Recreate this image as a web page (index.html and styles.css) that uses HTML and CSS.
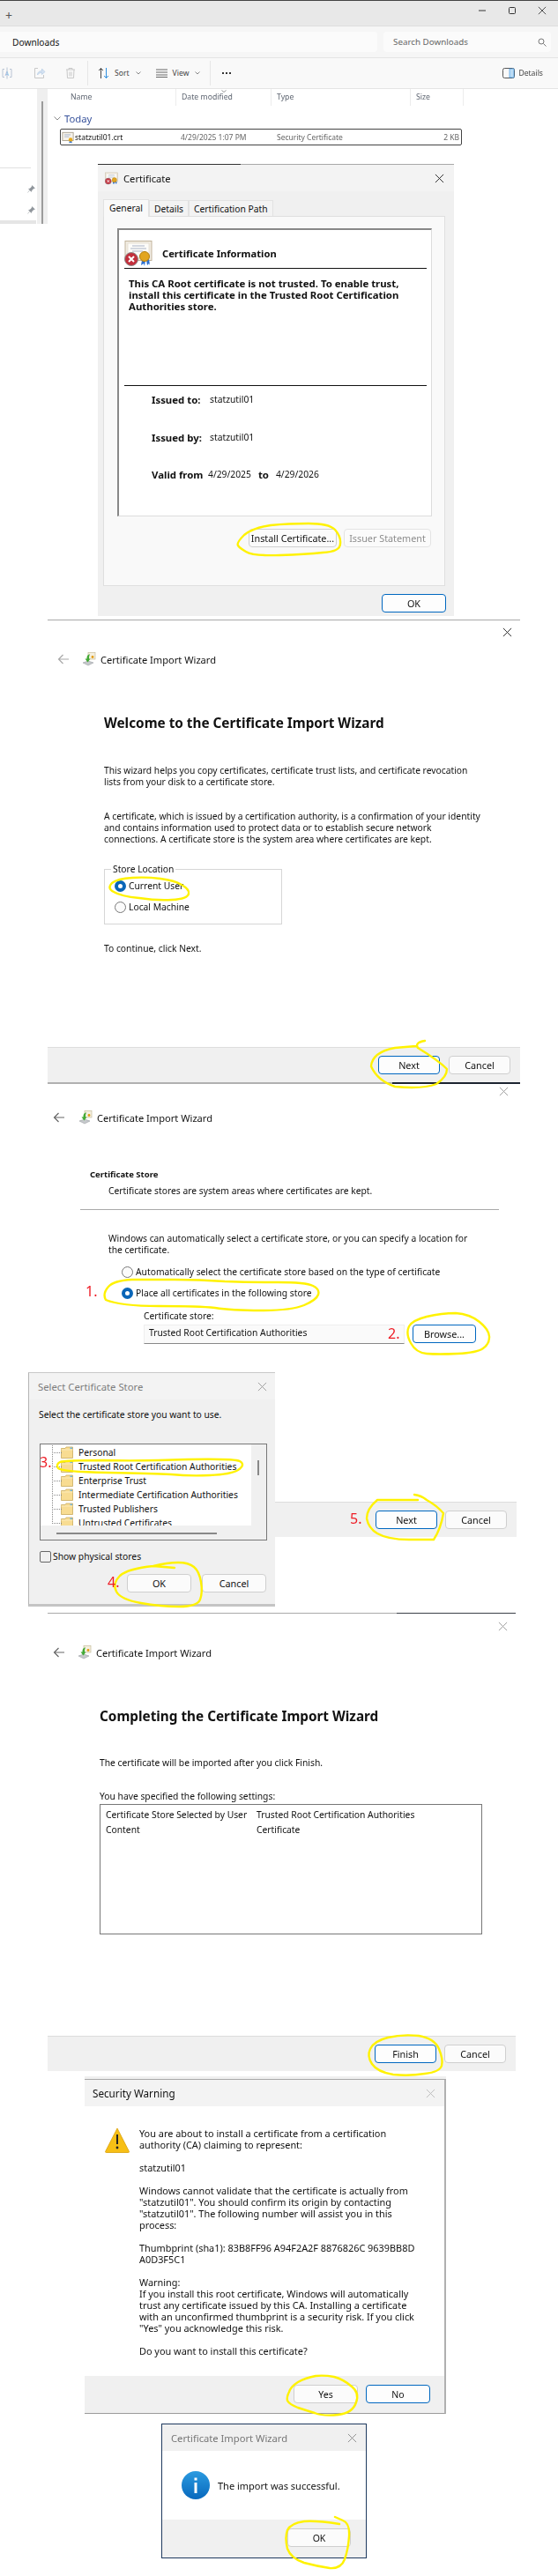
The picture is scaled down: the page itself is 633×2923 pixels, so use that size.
FILE: index.html
```html
<!DOCTYPE html>
<html lang="en">

<head>
  <meta charset="UTF-8">
  <title>Installing a certificate</title>
  <link rel="stylesheet" href="styles.css">
</head>

<body>
  <svg class="defs" width="0" height="0">
    <symbol id="cert" viewBox="0 0 32 29">
      <rect x="1" y="0.5" width="30" height="22" fill="#f1ece2" stroke="#c2b49c"/>
      <rect x="4" y="3" width="24" height="17" fill="#fdfcf9" stroke="#ddd4c4" stroke-width=".6"/>
      <path d="M9 6h14M7 9h18M9 12h12" stroke="#a9b3c6"/>
      <path d="M20 22l-1 6 3-2 1 3 1-7zM25 22l1 6 2-2 1 2-1-7z" fill="#2b6fd0"/>
      <circle cx="23" cy="18" r="5.5" fill="#e2a51f" stroke="#b57f10"/>
      <circle cx="8" cy="21" r="7.5" fill="#c22f3c" stroke="#8d8d8d"/>
      <path d="M5 18l6 6M11 18l-6 6" stroke="#fff" stroke-width="2"/>
    </symbol>
    <symbol id="file-cert" viewBox="0 0 16 16">
      <rect x="1" y="1.5" width="14" height="10.5" fill="#f6f2ea" stroke="#a8a08e"/>
      <path d="M3.5 4.5h8M3.5 7h6" stroke="#9fb0c8"/>
      <circle cx="11.5" cy="11" r="2.6" fill="#e8a91b"/>
      <path d="M10 13l-.5 2.5 2-1 2 1-.5-2.5z" fill="#2b6fd0"/>
    </symbol>
    <symbol id="wizard" viewBox="0 0 16 16">
      <rect x="7" y="0.5" width="8" height="7.5" fill="#f4efdf" stroke="#c7bd9c" stroke-width=".7"/>
      <circle cx="12" cy="5.5" r="1.4" fill="#e39a12"/>
      <path d="M1 12l6-2 6 2-6 3z" fill="#c6c9cc" stroke="#8f9397" stroke-width=".5"/>
      <path d="M8 2.5c-2.500 1-2.500 3-2.500 5H3.500l3 4 3-4H8c0-2 0-3.500 1-5z" fill="#42a935"/>
    </symbol>
    <symbol id="folder" viewBox="0 0 14 14">
      <path d="M0.500 2.500h4.500l1-1.500h7.500v12.500h-13z" fill="#f8dc92" stroke="#c9a95c" stroke-width=".8"/>
      <path d="M0.500 4h13" stroke="#fbeab9"/>
      <rect x="10.500" y="1.500" width="2.500" height="1.500" fill="#6cb3e0"/>
    </symbol>
    <symbol id="close" viewBox="0 0 12 12">
      <path d="M1 1l10 10M11 1L1 11" fill="none" stroke="currentColor"/>
    </symbol>
  </svg>

  <div class="page">
    <!-- step 1: explorer and the certificate dialog on top of it -->
    <section class="explorer">
      <div class="ex-tabs">
        <span class="ex-plus">+</span>
        <div class="ex-controls">
          <svg width="10" height="10" viewBox="0 0 10 10"><path d="M1 5h8" stroke="#333"/></svg>
          <svg width="10" height="10" viewBox="0 0 10 10"><rect x="1.500" y="1.500" width="7" height="7" rx="1" fill="none" stroke="#333"/></svg>
          <svg width="10" height="10" viewBox="0 0 10 10"><use href="#close" color="#333"/></svg>
        </div>
      </div>
      <div class="ex-address">
        <div class="ex-path">Downloads</div>
        <div class="ex-search">
          <span>Search Downloads</span>
          <svg width="10" height="10" viewBox="0 0 10 10"><circle cx="4" cy="4" r="3" fill="none" stroke="#777"/><path d="M6.500 6.500L9.500 9.500" stroke="#777"/></svg>
        </div>
      </div>
      <div class="ex-toolbar">
        <svg class="tool-rename" width="14" height="14" viewBox="0 0 14 14"><path d="M4 2.500H2v9h2M10 2.500h2v9h-2M7 .5v13" fill="none" stroke="#b9c4d4"/><text x="4.500" y="9.500" class="tool-a">A</text></svg>
        <svg class="tool-share" width="14" height="14" viewBox="0 0 14 14"><path d="M5 1.500H1.500v11h10V9" fill="none" stroke="#c8c8c8"/><path d="M4.500 9c0-3 2-4.500 5-4.500V2L13 5.500 9.500 8.500V6.500C7 6.500 5.500 7.500 4.500 9z" fill="#d5e3f3" stroke="#b5cbe4" stroke-width=".7"/></svg>
        <svg class="tool-trash" width="12" height="14" viewBox="0 0 12 14"><path d="M1 3h10M4 3V1.500h4V3M2 3l.5 9.500h7L10 3M5 5.500v5M7 5.500v5" fill="none" stroke="#c8c8c8"/></svg>
        <span class="tool-sep"></span>
        <svg class="tool-sort" width="13" height="14" viewBox="0 0 13 14"><path d="M3.500 13V1.500M1 4l2.500-2.500L6 4" fill="none" stroke="#444"/><path d="M9.500 1v11.500M7 10l2.500 2.500L12 10" fill="none" stroke="#2f8fe0"/></svg>
        <span class="tool-label">Sort</span>
        <svg class="tool-chev" width="6" height="4" viewBox="0 0 6 4"><path d="M.5.5L3 3 5.500.5" fill="none" stroke="#888"/></svg>
        <svg class="tool-view" width="13" height="10" viewBox="0 0 13 10"><path d="M0 1h13M0 4h13M0 7h13M0 9.500h13" stroke="#666"/></svg>
        <span class="tool-label">View</span>
        <svg class="tool-chev" width="6" height="4" viewBox="0 0 6 4"><path d="M.5.5L3 3 5.500.5" fill="none" stroke="#888"/></svg>
        <span class="tool-sep tool-sep-2"></span>
        <span class="tool-more"><i></i><i></i><i></i></span>
        <svg class="tool-details" width="14" height="12" viewBox="0 0 14 12"><rect x=".5" y=".5" width="13" height="11" rx="2" fill="none" stroke="#555"/><rect x="8" y="1" width="5" height="10" fill="#bcdcf5" stroke="#2f8fe0" stroke-width=".6"/></svg>
        <span class="tool-label">Details</span>
      </div>
      <div class="ex-main">
        <nav class="ex-nav">
          <div class="ex-nav-rule"></div>
          <svg class="ex-pin" width="9" height="9" viewBox="0 0 9 9"><path d="M5.500.5l3 3-1.500.5-2 2-.5 1.500-3-3L3 4l2-2z M2.500 6L.5 8.500" fill="#8f959b" stroke="#8f959b" stroke-width=".5"/></svg>
          <svg class="ex-pin" width="9" height="9" viewBox="0 0 9 9"><path d="M5.500.5l3 3-1.500.5-2 2-.5 1.500-3-3L3 4l2-2z M2.500 6L.5 8.500" fill="#8f959b" stroke="#8f959b" stroke-width=".5"/></svg>
          <div class="ex-nav-active"></div>
        </nav>
        <div class="ex-scroll"><span></span></div>
        <div class="ex-files">
          <div class="ex-cols">
            <span class="col-name">Name</span>
            <span class="col-date">Date modified
              <svg width="6" height="3" viewBox="0 0 6 3"><path d="M.5.5L3 2.500 5.500.5" fill="none" stroke="#999"/></svg>
            </span>
            <span class="col-type">Type</span>
            <span class="col-size">Size</span>
          </div>
          <div class="ex-group">
            <svg width="8" height="5" viewBox="0 0 8 5"><path d="M.5.500L4 4 7.500.5" fill="none" stroke="#8a8a8a"/></svg>
            <span>Today</span>
          </div>
          <div class="ex-row">
            <svg width="14" height="14"><use href="#file-cert"/></svg>
            <span class="row-name">statzutil01.crt</span>
            <span class="row-date">4/29/2025 1:07 PM</span>
            <span class="row-type">Security Certificate</span>
            <span class="row-size">2 KB</span>
          </div>
        </div>
      </div>
    </section>

    <section class="cert-dialog">
      <div class="topline topline-cert"></div>
      <div class="dlg-title">
        <svg width="15" height="15"><use href="#cert"/></svg>
        <span>Certificate</span>
        <svg class="dlg-x" width="11" height="11"><use href="#close" color="#222"/></svg>
      </div>
      <div class="cert-tabs">
        <span class="cert-tab is-active">General</span>
        <span class="cert-tab">Details</span>
        <span class="cert-tab">Certification Path</span>
      </div>
      <div class="cert-panel">
        <div class="cert-info">
          <div class="cert-info-head">
            <svg width="32" height="29"><use href="#cert"/></svg>
            <strong>Certificate Information</strong>
          </div>
          <p class="cert-warn">This CA Root certificate is not trusted. To enable trust,<br>install this certificate in the Trusted Root Certification<br>Authorities store.</p>
          <dl class="cert-fields">
            <div class="cert-field"><dt>Issued to:</dt><dd>statzutil01</dd></div>
            <div class="cert-field"><dt>Issued by:</dt><dd>statzutil01</dd></div>
            <div class="cert-field cert-valid"><dt>Valid from</dt><dd>4/29/2025</dd><dt class="cert-to">to</dt><dd>4/29/2026</dd></div>
          </dl>
        </div>
        <div class="cert-actions">
          <button class="btn btn-install">Install Certificate...</button>
          <button class="btn btn-off btn-issuer">Issuer Statement</button>
        </div>
      </div>
      <div class="cert-ok"><button class="btn btn-primary">OK</button></div>
    </section>

    <!-- step 2: welcome page -->
    <section class="wizard wizard-welcome">
      <div class="topline"></div>
      <div class="wiz-close"><svg width="11" height="11"><use href="#close" color="#222"/></svg></div>
      <div class="wiz-title">
        <svg class="wiz-back" width="13" height="12" viewBox="0 0 13 12"><path d="M13 6H1.500M6.500 1l-5 5 5 5" fill="none" stroke="#a8a8a8" stroke-width="1.200"/></svg>
        <svg class="wiz-icon" width="16" height="16"><use href="#wizard"/></svg>
        <span>Certificate Import Wizard</span>
      </div>
      <div class="wiz-body">
        <h1>Welcome to the Certificate Import Wizard</h1>
        <p class="wiz-p1">This wizard helps you copy certificates, certificate trust lists, and certificate revocation<br>lists from your disk to a certificate store.</p>
        <p class="wiz-p2">A certificate, which is issued by a certification authority, is a confirmation of your identity<br>and contains information used to protect data or to establish secure network<br>connections. A certificate store is the system area where certificates are kept.</p>
        <div class="store-group">
          <span class="store-legend">Store Location</span>
          <div class="radio"><i class="radio-dot is-on"></i>Current User</div>
          <div class="radio"><i class="radio-dot"></i>Local Machine</div>
        </div>
        <p class="wiz-p3">To continue, click Next.</p>
      </div>
      <div class="wiz-foot">
        <button class="btn btn-primary btn-wiz">Next</button>
        <button class="btn btn-wiz">Cancel</button>
      </div>
      <div class="wiz-bottom"></div>
    </section>

    <!-- step 3: store choice, with the picker dialog on top -->
    <section class="wizard wizard-store">
      <div class="wiz-close"><svg width="11" height="11"><use href="#close" color="#999"/></svg></div>
      <div class="wiz-title">
        <svg class="wiz-back" width="13" height="12" viewBox="0 0 13 12"><path d="M13 6H1.500M6.500 1l-5 5 5 5" fill="none" stroke="#666" stroke-width="1.200"/></svg>
        <svg class="wiz-icon" width="16" height="16"><use href="#wizard"/></svg>
        <span>Certificate Import Wizard</span>
      </div>
      <div class="store-head">
        <strong>Certificate Store</strong>
        <p>Certificate stores are system areas where certificates are kept.</p>
      </div>
      <div class="store-body">
        <p>Windows can automatically select a certificate store, or you can specify a location for<br>the certificate.</p>
        <div class="radio radio-auto"><i class="radio-dot"></i>Automatically select the certificate store based on the type of certificate</div>
        <div class="radio radio-place"><i class="radio-dot is-on"></i>Place all certificates in the following store</div>
        <div class="store-field">
          <label>Certificate store:</label>
          <div class="store-input-row">
            <div class="store-input">Trusted Root Certification Authorities</div>
            <button class="btn btn-primary btn-browse">Browse...</button>
          </div>
        </div>
      </div>
      <div class="wiz-foot">
        <button class="btn btn-primary btn-wiz">Next</button>
        <button class="btn btn-wiz">Cancel</button>
      </div>

      <div class="picker">
        <div class="dlg-title picker-title">
          <span>Select Certificate Store</span>
          <svg class="dlg-x" width="11" height="11"><use href="#close" color="#999"/></svg>
        </div>
        <p class="picker-text">Select the certificate store you want to use.</p>
        <div class="picker-list">
          <div class="picker-tree">
            <div class="tree-item"><svg width="14" height="14"><use href="#folder"/></svg>Personal</div>
            <div class="tree-item"><svg width="14" height="14"><use href="#folder"/></svg>Trusted Root Certification Authorities</div>
            <div class="tree-item"><svg width="14" height="14"><use href="#folder"/></svg>Enterprise Trust</div>
            <div class="tree-item"><svg width="14" height="14"><use href="#folder"/></svg>Intermediate Certification Authorities</div>
            <div class="tree-item"><svg width="14" height="14"><use href="#folder"/></svg>Trusted Publishers</div>
            <div class="tree-item"><svg width="14" height="14"><use href="#folder"/></svg>Untrusted Certificates</div>
          </div>
          <span class="picker-vbar"></span>
          <span class="picker-hbar"></span>
        </div>
        <div class="picker-check"><i></i>Show physical stores</div>
        <div class="picker-actions">
          <button class="btn btn-picker">OK</button>
          <button class="btn btn-picker">Cancel</button>
        </div>
      </div>
    </section>

    <!-- step 4: finish -->
    <section class="wizard wizard-finish">
      <div class="topline topline-finish"></div>
      <div class="wiz-close"><svg width="11" height="11"><use href="#close" color="#999"/></svg></div>
      <div class="wiz-title">
        <svg class="wiz-back" width="13" height="12" viewBox="0 0 13 12"><path d="M13 6H1.500M6.500 1l-5 5 5 5" fill="none" stroke="#666" stroke-width="1.200"/></svg>
        <svg class="wiz-icon" width="16" height="16"><use href="#wizard"/></svg>
        <span>Certificate Import Wizard</span>
      </div>
      <div class="wiz-body">
        <h1>Completing the Certificate Import Wizard</h1>
        <p class="finish-p1">The certificate will be imported after you click Finish.</p>
        <p class="finish-p2">You have specified the following settings:</p>
        <div class="finish-box">
          <span>Certificate Store Selected by User</span><span>Trusted Root Certification Authorities</span>
          <span>Content</span><span>Certificate</span>
        </div>
      </div>
      <div class="wiz-foot">
        <button class="btn btn-primary btn-wiz">Finish</button>
        <button class="btn btn-wiz">Cancel</button>
      </div>
    </section>

    <!-- step 5: security warning -->
    <section class="warning">
      <div class="warning-strip"></div>
      <div class="dlg-title warning-title">
        <span>Security Warning</span>
        <svg class="dlg-x" width="11" height="11"><use href="#close" color="#bbb"/></svg>
      </div>
      <div class="warning-body">
        <svg class="warning-icon" width="28" height="29" viewBox="0 0 28 29">
          <path d="M14 1L27.500 27.500a1 1 0 0 1-1 1h-25a1 1 0 0 1-1-1z" fill="#f7bf15" stroke="#d9a008" stroke-width=".8" stroke-linejoin="round"/>
          <path d="M14 8v11" stroke="#222" stroke-width="2"/>
          <circle cx="14" cy="23" r="1.400" fill="#222"/>
        </svg>
        <div class="warning-text">
          <p>You are about to install a certificate from a certification<br>authority (CA) claiming to represent:</p>
          <p>statzutil01</p>
          <p>Windows cannot validate that the certificate is actually from<br>"statzutil01". You should confirm its origin by contacting<br>"statzutil01". The following number will assist you in this<br>process:</p>
          <p>Thumbprint (sha1): 83B8FF96 A94F2A2F 8876826C 9639BB8D<br>A0D3F5C1</p>
          <p>Warning:<br>If you install this root certificate, Windows will automatically<br>trust any certificate issued by this CA. Installing a certificate<br>with an unconfirmed thumbprint is a security risk. If you click<br>"Yes" you acknowledge this risk.</p>
          <p>Do you want to install this certificate?</p>
        </div>
      </div>
      <div class="warning-foot">
        <button class="btn btn-warn">Yes</button>
        <button class="btn btn-primary btn-warn">No</button>
      </div>
    </section>

    <!-- step 6: done -->
    <section class="done">
      <div class="dlg-title done-title">
        <span>Certificate Import Wizard</span>
        <svg class="dlg-x" width="11" height="11"><use href="#close" color="#888"/></svg>
      </div>
      <div class="done-body">
        <svg width="32" height="32" viewBox="0 0 32 32">
          <defs><linearGradient id="info-fill" x1="0" y1="0" x2="0" y2="1"><stop offset="0" stop-color="#2b9be0"/><stop offset="1" stop-color="#0868bd"/></linearGradient></defs>
          <circle cx="16" cy="16" r="16" fill="url(#info-fill)"/>
          <rect x="14.500" y="13" width="3" height="12" fill="#fff"/>
          <rect x="14.500" y="7.500" width="3" height="3" fill="#fff"/>
        </svg>
        <span>The import was successful.</span>
      </div>
      <div class="done-foot"><button class="btn btn-warn">OK</button></div>
    </section>

    <!-- hand drawn marks over the screenshots -->
    <svg class="marks" width="633" height="2923" viewBox="0 0 633 2923">
      <g class="marks-ink">
        <path d="M270 619Q268 616 277 607Q287 599 307 596Q327 594 350 594Q373 594 380 601Q387 609 386 617Q386 626 366 627Q347 629 317 630Q287 631 279 626Q272 622 270 619Z"/>
        <path d="M129 1012Q121 1008 127 1002Q133 997 150 996Q166 995 182 997Q198 999 206 1004Q215 1009 214 1014Q213 1020 195 1021Q178 1022 158 1019Q137 1017 129 1012Z"/>
        <path d="M482 1181Q470 1183 474 1189Q497 1203 507 1213Q507 1222 495 1230Q480 1236 448 1233Q428 1226 421 1210Q422 1194 448 1189L472 1187"/>
        <path d="M120 1475Q116 1468 123 1460Q129 1453 150 1452Q170 1452 198 1452Q226 1452 255 1454Q283 1455 315 1455Q347 1455 355 1459Q363 1463 361 1469Q359 1475 345 1481Q331 1487 296 1487Q262 1487 244 1484Q226 1482 180 1482Q137 1482 120 1475Z"/>
        <path d="M466 1524Q460 1513 464 1505Q468 1498 484 1494Q501 1490 517 1490Q533 1491 544 1500Q556 1510 555 1518Q555 1525 548 1530Q541 1535 519 1536Q497 1537 484 1536Q472 1535 466 1524Z"/>
        <path d="M66 1666Q63 1662 68 1659Q73 1657 117 1657Q161 1658 213 1656Q266 1655 272 1658Q279 1662 270 1668Q262 1673 238 1674Q214 1675 194 1673Q174 1672 122 1671Q69 1670 66 1666Z"/>
        <path d="M198 1779L174 1777Q145 1780 136 1788Q127 1797 132 1806Q137 1815 160 1819Q182 1823 203 1823Q224 1823 227 1815Q230 1807 228 1795Q226 1783 220 1778Q214 1773 202 1773Q190 1773 174 1777"/>
        <path d="M474 1702L428 1702Q416 1712 416 1723Q418 1734 428 1740Q440 1747 464 1747L492 1747Q500 1735 503 1717Q495 1708 484 1702Q478 1697 470 1696"/>
        <path d="M422 2342Q416 2333 420 2325Q424 2316 440 2312Q456 2308 475 2310Q493 2313 498 2325Q503 2337 501 2344Q499 2351 482 2353Q464 2356 446 2354Q428 2351 422 2342Z"/>
        <path d="M326 2724Q325 2720 328 2714Q330 2708 338 2703Q347 2698 358 2696Q368 2695 379 2697Q390 2700 399 2708Q408 2715 404 2726Q400 2738 384 2740Q367 2742 357 2738Q347 2735 338 2732Q328 2728 326 2724Z"/>
        <path d="M385 2864Q360 2860 345 2861Q330 2863 326 2871Q323 2880 326 2892Q330 2903 345 2908Q360 2912 374 2914Q387 2915 391 2904Q395 2893 396 2878Q397 2863 389 2860L380 2856"/>
      </g>
      <g class="marks-num">
        <text x="97" y="1471">1.</text>
        <text x="440" y="1519">2.</text>
        <text x="45" y="1665">3.</text>
        <text x="122" y="1801">4.</text>
        <text x="397" y="1729">5.</text>
      </g>
    </svg>
  </div>
</body>

</html>
```

FILE: styles.css
```css
* {
  box-sizing: border-box;
}

body {
  margin: 0;
  background: #fff;
  color: #111;
  font-family: "Noto Sans", "Open Sans", sans-serif;
  font-size: 10.300px;
  line-height: 13px;
}

p, h1, dl, dd {
  margin: 0;
}

.defs {
  position: absolute;
}

.page {
  position: relative;
  width: 633px;
  height: 2923px;
  overflow: hidden;
  filter: blur(.3px);
}

/* marks */
.marks {
  position: absolute;
  top: 0;
  left: 0;
  pointer-events: none;
}

.marks-ink path {
  fill: none;
  stroke: #fff200;
  stroke-width: 2.400;
  stroke-linecap: round;
  stroke-linejoin: round;
}

.marks-num text {
  fill: #ee1c25;
  font-family: "Noto Sans", sans-serif;
  font-size: 16px;
}

/* shared */
.topline {
  height: 1px;
  background: #a9a9a9;
}

.topline-cert {
  background: linear-gradient(90deg, #333 40%, #a9a9a9 40%);
}

.topline-finish {
  background: linear-gradient(90deg, #a9a9a9 74.600%, #3a4048 74.600%);
}

.btn {
  display: block;
  height: 21px;
  padding: 0;
  border: 1px solid #cfcfcf;
  border-radius: 4px;
  background: #fbfbfb;
  color: #111;
  font-family: inherit;
  font-size: 10.800px;
  line-height: 18px;
}

.btn-primary {
  border-color: #0067c0;
  background: #fdfdfd;
}

.btn-off {
  color: #8d8d8d;
  border-color: #e3e3e3;
}

.dlg-title {
  display: flex;
  align-items: center;
  height: 30px;
  background: #f3f3f3;
  font-size: 11.200px;
}

.dlg-x {
  margin-left: auto;
}

.radio {
  display: flex;
  align-items: center;
  gap: 3px;
}

.radio-dot {
  width: 13px;
  height: 13px;
  border: 1px solid #777;
  border-radius: 50%;
  background: #fbfbfb;
}

.radio-dot.is-on {
  border: 4px solid #0a66b8;
  background: #fff;
}

/* explorer */
.explorer {
  height: 254px;
  margin-bottom: -68px;
  border-top: 1px solid #444;
}

.ex-tabs {
  display: flex;
  align-items: flex-start;
  height: 29px;
  background: #e8e8e8;
  border-bottom: 1px solid #dedede;
}

.ex-plus {
  margin: 9px 0 0 6px;
  color: #555;
  font-size: 14px;
  line-height: 16px;
}

.ex-controls {
  display: flex;
  gap: 24px;
  margin: 6px 13px 0 auto;
}

.ex-address {
  display: flex;
  gap: 7px;
  height: 36px;
  padding: 6px 8px 6px 0;
  background: #f6f6f6;
  border-bottom: 1px solid #e4e4e4;
}

.ex-path {
  width: 428px;
  padding-left: 14px;
  border-radius: 0 4px 4px 0;
  background: #fbfbfb;
  font-size: 10.200px;
  line-height: 24px;
}

.ex-search {
  display: flex;
  align-items: center;
  justify-content: space-between;
  flex: 1;
  padding: 0 5px 0 11px;
  border-radius: 4px;
  background: #fbfbfb;
  color: #666;
  font-size: 9.800px;
}

.ex-toolbar {
  display: flex;
  align-items: center;
  height: 35px;
  background: #f9f9f9;
  border-bottom: 1px solid #e4e4e4;
  color: #444;
  font-size: 8.600px;
}

.tool-rename {
  margin-left: 1px;
}

.tool-a {
  font-size: 7px;
  fill: #8ab4e0;
}

.tool-share {
  margin-left: 23px;
}

.tool-trash {
  margin-left: 22px;
}

.tool-sep {
  width: 1px;
  height: 28px;
  margin-left: 13px;
  background: #e6e6e6;
}

.tool-sort {
  margin-left: 11px;
}

.tool-label {
  margin-left: 6px;
}

.tool-chev {
  margin-left: 7px;
}

.tool-view {
  margin-left: 17px;
}

.tool-sep-2 {
  margin-left: 11px;
}

.tool-more {
  display: flex;
  gap: 2px;
  margin-left: 13px;
}

.tool-more i {
  width: 2px;
  height: 2px;
  background: #333;
}

.tool-details {
  margin-left: auto;
}

.tool-details + .tool-label {
  margin: 0 17px 0 4px;
}

.ex-main {
  display: flex;
  height: 153px;
}

.ex-nav {
  width: 42px;
  height: 153px;
  padding-top: 89px;
}

.ex-nav-rule {
  width: 35px;
  height: 1px;
  background: #e0e0e0;
  margin-bottom: 19px;
}

.ex-pin {
  display: block;
  margin: 0 0 15px 31px;
}

.ex-nav-active {
  width: 41px;
  height: 4px;
  margin-top: -8px;
  background: #e5e5e5;
}

.ex-scroll {
  display: flex;
  justify-content: center;
  width: 12px;
  padding-top: 14px;
  background: #efefef;
}

.ex-scroll span {
  width: 2px;
  background: #9b9b9b;
}

.ex-files {
  flex: 1;
}

.ex-cols {
  display: grid;
  grid-template-columns: 146px 108px 158px 60px;
  height: 19px;
  color: #5f6672;
  line-height: 19px;
  font-size: 8.700px;
}

.ex-cols span {
  position: relative;
  padding-left: 6px;
  border-right: 1px solid #ececec;
}

.ex-cols .col-name {
  padding-left: 26px;
}

.col-date svg {
  position: absolute;
  top: 1px;
  left: 51px;
}

.ex-group {
  display: flex;
  align-items: center;
  gap: 4px;
  height: 18px;
  margin: 5px 0 0 7px;
  color: #38539c;
  font-size: 11.300px;
}

.ex-row {
  display: grid;
  grid-template-columns: 15px 120px 109px 1fr auto;
  align-items: center;
  width: 456px;
  height: 19px;
  margin: 3px 0 0 14px;
  padding: 0 2px 0 1px;
  border: 1px solid #444;
  border-radius: 2px;
  color: #666;
  font-size: 8.500px;
}

.row-name {
  color: #111;
}

/* certificate dialog */
.cert-dialog {
  position: relative;
  width: 404px;
  height: 513px;
  margin-left: 111px;
  background: #f0f0f0;
}

.cert-dialog .dlg-title {
  gap: 6px;
  padding: 0 11px 0 8px;
}

.cert-tabs {
  display: flex;
  align-items: flex-end;
  height: 28px;
  padding-left: 6px;
}

.cert-tab {
  height: 18px;
  padding: 0 5px;
  border: 1px solid #e2e2e2;
  border-bottom: 0;
  background: #f3f3f3;
  line-height: 18px;
}

.cert-tab.is-active {
  position: relative;
  height: 20px;
  margin-bottom: -1px;
  padding: 0 6px;
  background: #f9f9f9;
}

.cert-panel {
  width: 388px;
  height: 420px;
  margin-left: 6px;
  padding: 13px 15px 0 15px;
  border: 1px solid #dfdfdf;
  background: #f9f9f9;
}

.cert-info {
  width: 357px;
  height: 327px;
  padding-left: 6px;
  padding-right: 5px;
  border-style: solid;
  border-width: 2px 1px 1px 2px;
  border-color: #888 #ddd #ddd #888;
  background: #fff;
}

.cert-info-head {
  display: flex;
  align-items: center;
  gap: 11px;
  height: 44px;
  padding-top: 9px;
  border-bottom: 1px solid #111;
  font-size: 11.200px;
}

.cert-warn {
  height: 133px;
  padding: 10px 0 0 5px;
  border-bottom: 1px solid #111;
  font-size: 11.400px;
  font-weight: 700;
}

.cert-fields {
  padding-left: 31px;
  padding-top: 9px;
}

.cert-field {
  display: flex;
  height: 42.500px;
}

.cert-field dt {
  width: 66px;
  font-size: 11.400px;
  font-weight: 700;
}

.cert-valid dt {
  width: 64px;
}

.cert-valid .cert-to {
  width: auto;
  margin: 0 8px;
}

.cert-actions {
  display: flex;
  justify-content: flex-end;
  gap: 8px;
  margin-top: 14px;
}

.btn-install {
  width: 100px;
}

.btn-issuer {
  width: 99px;
}

.cert-ok {
  display: flex;
  justify-content: flex-end;
  padding: 9px 9px 0 0;
}

.cert-ok .btn {
  width: 73px;
}

/* wizards */
.wizard {
  position: relative;
  display: flex;
  flex-direction: column;
  margin-left: 54px;
}

.wizard-welcome {
  width: 536px;
  height: 527px;
  margin-top: 4px;
}

.wizard-store {
  width: 532px;
  height: 514px;
}

.wizard-finish {
  width: 531px;
  height: 520px;
  margin-top: 86px;
}

.wiz-close {
  display: flex;
  justify-content: flex-end;
  align-items: center;
  height: 27px;
  padding-right: 9px;
}

.wizard-store .wiz-close {
  height: 17px;
}

.wizard-finish .wiz-close {
  height: 28px;
}

.wiz-title {
  display: flex;
  align-items: center;
  height: 16px;
  margin-top: 9px;
  padding-left: 11px;
  font-size: 11.100px;
}

.wizard-store .wiz-title {
  margin-top: 13px;
  padding-left: 6px;
}

.wizard-finish .wiz-title {
  margin-top: 8px;
  padding-left: 6px;
}

.wiz-icon {
  margin: 0 5px 0 15px;
}

.wizard-store .wiz-icon {
  margin-left: 16px;
}

.wiz-body {
  padding-left: 64px;
}

.wizard-finish .wiz-body {
  padding-left: 59px;
}

.wiz-body h1 {
  margin-top: 54px;
  font-size: 15.300px;
  font-weight: 700;
  line-height: 20px;
}

.wiz-p1 {
  margin-top: 38px;
}

.wiz-p2 {
  margin-top: 26px;
}

.store-group {
  position: relative;
  width: 202px;
  height: 63px;
  margin-top: 27px;
  padding: 12px 0 0 11px;
  border: 1px solid #d6d6d6;
}

.store-legend {
  position: absolute;
  top: -7px;
  left: 7px;
  padding: 0 2px;
  background: #fff;
}

.store-group .radio {
  height: 13px;
}

.store-group .radio + .radio {
  margin-top: 11px;
}

.wiz-p3 {
  margin-top: 21px;
}

.wiz-foot {
  display: flex;
  justify-content: flex-end;
  gap: 10px;
  height: 40px;
  margin-top: auto;
  padding: 9px 11px 0 0;
  background: #f0f0f0;
  border-top: 1px solid #ddd;
}

.wizard-store .wiz-foot,
.wizard-finish .wiz-foot {
  gap: 9px;
}

.btn-wiz {
  width: 70px;
}

.wiz-bottom {
  height: 2px;
  background: linear-gradient(90deg, #b0b0b0 73%, #1c2430 73%);
}

/* store page */
.store-head {
  padding-left: 48px;
  margin-top: 50px;
}

.store-head strong {
  display: block;
  font-size: 9.500px;
  line-height: 13px;
}

.store-head p {
  margin: 6px 0 0 21px;
}

.store-body {
  width: 475px;
  margin: 14px 0 0 37px;
  padding: 26px 0 0 32px;
  border-top: 1px solid #aaa;
}

.radio-auto {
  margin: 12px 0 0 15px;
}

.radio-place {
  margin: 11px 0 0 15px;
}

.store-field {
  margin: 13px 0 0 40px;
}

.store-input-row {
  display: flex;
  gap: 9px;
  margin-top: 3px;
}

.store-input {
  width: 296px;
  height: 22px;
  padding: 2px 0 0 5px;
  border: 1px solid #eee;
  border-bottom: 1px solid #888;
  background: #fafafa;
}

.btn-browse {
  width: 72px;
}

/* store picker */
.picker {
  position: absolute;
  top: 327px;
  left: -22px;
  width: 280px;
  height: 266px;
  background: #f0f0f0;
  border-top: 1px solid #c9c9c9;
  border-left: 1px solid #b5b5b5;
  border-bottom: 3px solid #c4c4c4;
}

.picker-title {
  padding: 0 9px 0 10px;
  color: #7d7d7d;
  font-size: 11.300px;
}

.picker-text {
  margin: 11px 0 0 11px;
}

.picker-list {
  position: relative;
  width: 258px;
  height: 110px;
  margin: 26px 0 0 12px;
  border: 1px solid #777;
  background: #f0f0f0;
}

.picker-tree {
  width: 239px;
  height: 92px;
  padding: 1px 0 0 13px;
  overflow: hidden;
  background: #fff;
}

.tree-item {
  position: relative;
  display: flex;
  align-items: center;
  gap: 6px;
  height: 16px;
  padding-left: 10px;
  white-space: nowrap;
}

.tree-item::before {
  content: "";
  position: absolute;
  left: 0;
  top: -8px;
  width: 10px;
  height: 16px;
  border-left: 1px dotted #888;
  border-bottom: 1px dotted #888;
}

.picker-vbar {
  position: absolute;
  top: 18px;
  left: 246px;
  width: 2px;
  height: 17px;
  background: #888;
}

.picker-hbar {
  position: absolute;
  top: 100px;
  left: 18px;
  width: 182px;
  height: 2px;
  background: #888;
}

.picker-check {
  display: flex;
  align-items: center;
  gap: 2px;
  margin: 12px 0 0 12px;
}

.picker-check i {
  width: 13px;
  height: 13px;
  border: 1px solid #666;
  border-radius: 2px;
}

.picker-actions {
  display: flex;
  justify-content: flex-end;
  gap: 12px;
  margin-top: 13px;
  padding-right: 10px;
}

.btn-picker {
  width: 73px;
}

/* finish page */
.finish-p1 {
  margin-top: 37px;
}

.finish-p2 {
  margin-top: 25px;
}

.finish-box {
  display: grid;
  grid-template-columns: 171px 1fr;
  grid-auto-rows: 17px;
  align-items: center;
  align-content: start;
  width: 434px;
  height: 148px;
  margin-top: 2px;
  padding: 3px 0 0 6px;
  border: 1px solid #777;
}

/* security warning */
.warning {
  display: flex;
  flex-direction: column;
  width: 410px;
  height: 383px;
  margin: 6px 0 0 96px;
  border-right: 2px solid #b0b0b0;
  border-bottom: 1px solid #9a9a9a;
  font-size: 10.900px;
}

.warning-strip {
  height: 4px;
  margin-right: -2px;
  background: linear-gradient(#efefef 75%, #a9a9a9 75%);
}

.warning-title {
  flex: none;
  padding: 0 10px 0 9px;
  font-size: 11.700px;
}

.warning-body {
  display: flex;
  flex: 1;
  gap: 11px;
  padding: 24px 0 0 23px;
}

.warning-icon {
  flex: none;
}

.warning-text p + p {
  margin-top: 13px;
}

.warning-foot {
  display: flex;
  justify-content: flex-end;
  gap: 9px;
  height: 42px;
  padding: 10px 16px 0 0;
  background: #f0f0f0;
}

.btn-warn {
  width: 73px;
  font-size: 10.500px;
}

/* success */
.done {
  display: flex;
  flex-direction: column;
  width: 233px;
  height: 153px;
  margin: 11px 0 0 183px;
  border: 1px solid #1f3a5f;
  font-size: 11px;
}

.done-title {
  flex: none;
  padding: 0 10px;
  background: #f0f0f0;
  color: #777;
}

.done-body {
  display: flex;
  align-items: center;
  gap: 9px;
  height: 78px;
  padding-left: 22px;
}

.done-foot {
  display: flex;
  justify-content: flex-end;
  flex: 1;
  padding: 10px 17px 0 0;
  background: #f0f0f0;
}

.done-foot .btn {
  width: 72px;
}
```
